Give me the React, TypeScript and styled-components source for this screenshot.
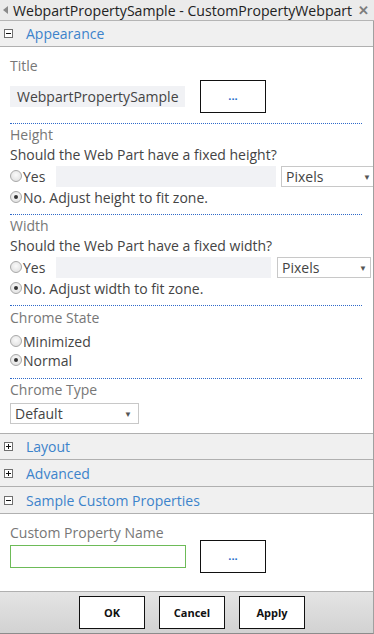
import React from "react";
import styled, { createGlobalStyle } from "styled-components";

const Global = createGlobalStyle`
  html, body { margin: 0; padding: 0; background: #fff; }
  body { font-family: "Open Sans", "Noto Sans", sans-serif; }
  * { box-sizing: border-box; }
`;

const Frame = styled.div`
  width: 374px;
  height: 634px;
  display: flex;
  flex-direction: column;
  overflow: hidden;
`;

const TitleBar = styled.div`
  height: 21px;
  flex: none;
  display: flex;
  align-items: center;
  background: #ebebeb;
  border-bottom: 1px solid #b5b5b5;
  padding: 0 0 0 3px;
  color: #222;
  font-size: 14.1px;
`;

const BackArrow = styled.span`
  width: 0;
  height: 0;
  border-top: 4px solid transparent;
  border-bottom: 4px solid transparent;
  border-right: 5px solid #8a8a8a;
  margin-right: 5px;
  flex: none;
`;

const TitleText = styled.span`
  flex: 1;
  min-width: 0;
  white-space: nowrap;
`;

const Close = styled.span`
  width: 22px;
  flex: none;
  text-align: center;
  color: #7d7d7d;
  font-size: 13px;
  font-weight: bold;
`;

const Body = styled.div`
  flex: 1;
  border-right: 1px solid #a0a0a0;
  overflow: hidden;
  display: flex;
  flex-direction: column;
`;

const SectionHeader = styled.div<{ $first?: boolean }>`
  height: ${(p) => (p.$first ? 26 : 27)}px;
  flex: none;
  display: flex;
  align-items: center;
  background: #f0f0f0;
  border-top: ${(p) => (p.$first ? "none" : "1px solid #b0b0b0")};
  border-bottom: 1px solid #b0b0b0;
  padding-left: 4px;
  color: #3c83cb;
  font-size: 14px;
`;

const Toggle = styled.span<{ $open: boolean }>`
  position: relative;
  width: 9px;
  height: 9px;
  flex: none;
  border: 1px solid #6f6f6f;
  background: #fff;
  margin-right: 13px;
  &::before {
    content: "";
    position: absolute;
    left: 1px;
    top: 3px;
    width: 5px;
    height: 1px;
    background: #111;
  }
  &::after {
    content: "";
    display: ${(p) => (p.$open ? "none" : "block")};
    position: absolute;
    left: 3px;
    top: 1px;
    width: 1px;
    height: 5px;
    background: #111;
  }
`;

const Content = styled.div`
  padding: 0 10px;
  display: flex;
  flex-direction: column;
`;

const Group = styled.div<{ $top: number }>`
  padding-top: ${(p) => p.$top}px;
  display: flex;
  flex-direction: column;
`;

const Label = styled.div`
  color: #777;
  font-size: 14px;
  line-height: 20px;
`;

const Question = styled.div`
  color: #444;
  font-size: 14px;
  line-height: 20px;
`;

const Divider = styled.div<{ $gap: number }>`
  margin-top: ${(p) => p.$gap}px;
  width: 352px;
  border-top: 1px dotted #2f69c9;
`;

const Row = styled.div`
  display: flex;
  align-items: center;
`;

const RadioRow = styled.div<{ $h: number }>`
  display: flex;
  align-items: center;
  height: ${(p) => p.$h}px;
  color: #444;
  font-size: 14px;
  white-space: nowrap;
`;

const Radio = styled.span<{ $checked?: boolean }>`
  position: relative;
  width: 12px;
  height: 12px;
  border-radius: 50%;
  border: 1px solid #a8a8a8;
  background: radial-gradient(circle at 50% 40%, #fafafa, #dcdcdc);
  margin-right: 1px;
  flex: none;
  &::after {
    content: "";
    display: ${(p) => (p.$checked ? "block" : "none")};
    position: absolute;
    left: 3px;
    top: 3px;
    width: 4px;
    height: 4px;
    border-radius: 50%;
    background: #333;
  }
`;

const RadioText = styled.span`
  width: 33px;
  flex: none;
`;

const Field = styled.div<{ $w: number; $h: number; $green?: boolean }>`
  width: ${(p) => p.$w}px;
  height: ${(p) => p.$h}px;
  flex: none;
  display: flex;
  align-items: center;
  padding-left: 7px;
  background: ${(p) => (p.$green ? "#fff" : "#f1f2f5")};
  border: ${(p) => (p.$green ? "1px solid #6dbb58" : "none")};
  color: #444;
  font-size: 14px;
`;

const Select = styled.div<{ $w: number }>`
  width: ${(p) => p.$w}px;
  height: 21px;
  flex: none;
  display: flex;
  align-items: center;
  justify-content: space-between;
  padding: 0 3px 0 4px;
  border: 1px solid #c8c8c8;
  background: #fff;
  color: #444;
  font-size: 14px;
`;

const Caret = styled.span`
  font-size: 8px;
  color: #555;
`;

const Spacer = styled.span<{ $w: number }>`
  width: ${(p) => p.$w}px;
  flex: none;
`;

const DotsButton = styled.div`
  width: 66px;
  height: 33px;
  flex: none;
  border: 1px solid #111;
  background: #fff;
  display: flex;
  align-items: center;
  justify-content: center;
  color: #1f6ac9;
  font-size: 11px;
  font-weight: bold;
  padding-bottom: 2px;
`;

const Footer = styled.div`
  height: 43px;
  flex: none;
  border-top: 1px solid #b0b0b0;
  border-bottom: 1px solid #8c8c8c;
  border-right: 1px solid #a0a0a0;
  background: linear-gradient(#e4e4e4, #d2d2d2);
  display: flex;
  align-items: flex-start;
  padding: 4px 0 0 79px;
  gap: 14px;
`;

const FooterButton = styled.button`
  width: 66px;
  height: 33px;
  border: 1px solid #111;
  background: #fff;
  font-family: "Open Sans", "Noto Sans", sans-serif;
  font-size: 11px;
  font-weight: bold;
  color: #111;
  padding: 0;
`;

const FixedSize = ({ kind, field, gap }: { kind: string; field: number; gap: number }) => (
  <>
    <Label>{kind === "height" ? "Height" : "Width"}</Label>
    <Question>Should the Web Part have a fixed {kind}?</Question>
    <RadioRow $h={22}>
      <Radio />
      <RadioText>Yes</RadioText>
      <Field $w={field} $h={21} />
      <Spacer $w={gap} />
      <Select $w={94}>
        Pixels
        <Caret>▼</Caret>
      </Select>
    </RadioRow>
    <RadioRow $h={20}>
      <Radio $checked />
      No. Adjust {kind} to fit zone.
    </RadioRow>
  </>
);

export default function App() {
  return (
    <Frame>
      <Global />
      <TitleBar>
        <BackArrow />
        <TitleText>WebpartPropertySample - CustomPropertyWebpart</TitleText>
        <Close>✕</Close>
      </TitleBar>
      <Body>
        <SectionHeader $first>
          <Toggle $open />
          Appearance
        </SectionHeader>
        <Content>
          <Group $top={9}>
            <Label>Title</Label>
            <Row style={{ marginTop: 4 }}>
              <Field $w={175} $h={21}>WebpartPropertySample</Field>
              <Spacer $w={15} />
              <DotsButton>...</DotsButton>
            </Row>
            <Divider $gap={10} />
          </Group>

          <Group $top={1}>
            <FixedSize kind="height" field={220} gap={5} />
            <Divider $gap={7} />
          </Group>

          <Group $top={1}>
            <FixedSize kind="width" field={215} gap={6} />
            <Divider $gap={7} />
          </Group>

          <Group $top={2}>
            <Label>Chrome State</Label>
            <RadioRow $h={20} style={{ marginTop: 3 }}>
              <Radio />
              Minimized
            </RadioRow>
            <RadioRow $h={18}>
              <Radio $checked />
              Normal
            </RadioRow>
            <Divider $gap={9} />
          </Group>

          <Group $top={1}>
            <Label>Chrome Type</Label>
            <Select $w={129} style={{ marginTop: 3, paddingRight: 6 }}>
              Default
              <Caret>▼</Caret>
            </Select>
          </Group>
        </Content>

        <Spacer $w={0} style={{ height: 9 }} />
        <SectionHeader>
          <Toggle $open={false} />
          Layout
        </SectionHeader>
        <SectionHeader style={{ borderTop: "none" }}>
          <Toggle $open={false} />
          Advanced
        </SectionHeader>
        <SectionHeader style={{ borderTop: "none" }}>
          <Toggle $open />
          Sample Custom Properties
        </SectionHeader>

        <Content>
          <Group $top={9}>
            <Label>Custom Property Name</Label>
            <Row style={{ marginTop: -3 }}>
              <Field $w={176} $h={23} $green />
              <Spacer $w={14} />
              <DotsButton>...</DotsButton>
            </Row>
          </Group>
        </Content>
      </Body>
      <Footer>
        <FooterButton>OK</FooterButton>
        <FooterButton>Cancel</FooterButton>
        <FooterButton>Apply</FooterButton>
      </Footer>
    </Frame>
  );
}
